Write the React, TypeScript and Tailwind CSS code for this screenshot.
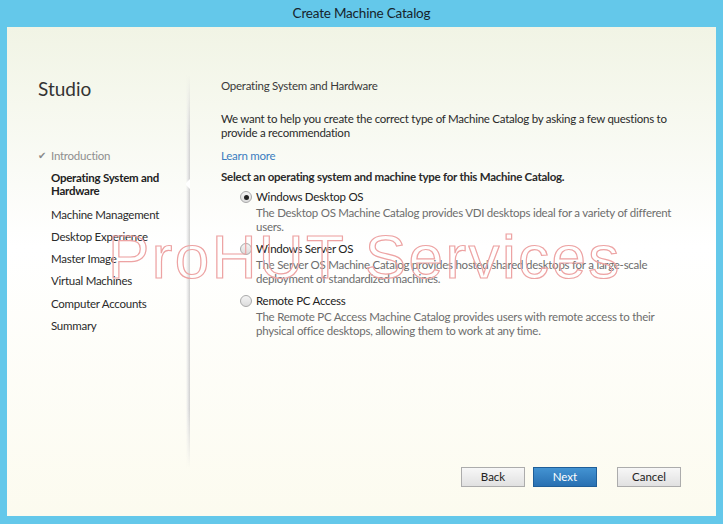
import React from "react";

const steps = [
  { id: 1, label: "Introduction", done: true },
  { id: 2, label: "Operating System and Hardware", active: true },
  { id: 3, label: "Machine Management" },
  { id: 4, label: "Desktop Experience" },
  { id: 5, label: "Master Image" },
  { id: 6, label: "Virtual Machines" },
  { id: 7, label: "Computer Accounts" },
  { id: 8, label: "Summary" },
];

const options = [
  {
    id: "desktop",
    title: "Windows Desktop OS",
    text: "The Desktop OS Machine Catalog provides VDI desktops ideal for a variety of different users.",
    checked: true,
  },
  {
    id: "server",
    title: "Windows Server OS",
    text: "The Server OS Machine Catalog provides hosted shared desktops for a large-scale deployment of standardized machines.",
  },
  {
    id: "remote",
    title: "Remote PC Access",
    text: "The Remote PC Access Machine Catalog provides users with remote access to their physical office desktops, allowing them to work at any time.",
  },
];

const Radio = ({ checked }: { checked?: boolean }) => (
  <span className="mt-[1px] flex h-[12px] w-[12px] shrink-0 items-center justify-center rounded-full border border-[#a9a9a9] bg-gradient-to-b from-[#f4f4f4] to-[#dcdcdc]">
    {checked && <span className="h-[5px] w-[5px] rounded-full bg-[#222]" />}
  </span>
);

const App = () => {
  return (
    <div className="relative flex h-[524px] w-[723px] flex-col overflow-hidden bg-[#64c8ea] font-['Lato',sans-serif] text-[#333]">
      {/* title bar */}
      <div className="flex h-[27px] items-center justify-center text-[13.5px] tracking-[-0.2px] text-[#16242c]">
        Create Machine Catalog
      </div>

      <div className="mx-[7px] mb-[8px] flex flex-1 bg-gradient-to-b from-[#f1f4e5] via-white via-45% to-[#fcfbef] text-[11.5px] tracking-[-0.25px]">
        {/* sidebar */}
        <aside className="flex w-[179px] flex-col pl-[31px]">
          <h1 className="mt-[50px] text-[19px] leading-[24px] tracking-normal text-[#333]">Studio</h1>
          <ul className="mt-[48px] flex flex-col gap-[9.3px] leading-[13px]">
            {steps.map((step) => (
              <li key={step.id} className="flex items-start">
                <span className="w-[13px] text-[10px] text-[#8a8a8a]">
                  {step.done ? "✔" : ""}
                </span>
                <span
                  className={
                    step.done
                      ? "text-[#8f8f8f]"
                      : step.active
                        ? "mb-[1px] w-[118px] font-bold text-[#222]"
                        : "text-[#2b2b2b]"
                  }
                >
                  {step.label}
                </span>
              </li>
            ))}
          </ul>
        </aside>

        {/* sidebar shadow */}
        <div className="relative my-[48px] w-[4px] bg-gradient-to-r from-transparent via-[#e6e6e6] to-[#cfcfcf] [mask-image:linear-gradient(to_bottom,transparent,black_15%,black_85%,transparent)]">
          <span className="absolute top-[104px] right-0 h-0 w-0 border-y-[5px] border-r-[5px] border-y-transparent border-r-white" />
        </div>

        {/* main */}
        <main className="flex flex-1 flex-col pl-[31px]">
          <h2 className="mt-[52px] leading-[14px] text-[#3a3a3a]">
            Operating System and Hardware
          </h2>
          <p className="mt-[19px] w-[462px] leading-[14px] text-[#2a2a2a]">
            We want to help you create the correct type of Machine Catalog by asking a few questions to
            provide a recommendation
          </p>
          <a className="mt-[9px] leading-[14px] text-[#3a7dbf]">Learn more</a>
          <p className="mt-[7px] font-bold leading-[14px] text-[#2a2a2a]">
            Select an operating system and machine type for this Machine Catalog.
          </p>
          <div className="mt-[6px] flex w-[464px] flex-col gap-[8px] pl-[19px]">
            {options.map((option) => (
              <div key={option.id} className="flex gap-[4px]">
                <Radio checked={option.checked} />
                <div className="flex flex-col leading-[14px]">
                  <span className="text-[#222]">{option.title}</span>
                  <span className="mt-[2px] text-[#6d6d6d]">{option.text}</span>
                </div>
              </div>
            ))}
          </div>

          <div className="mt-auto mb-[29px] flex justify-end pr-[35px] tracking-normal">
            <button className="h-[20px] w-[64px] border border-[#acacac] bg-gradient-to-b from-[#f7f7f7] to-[#e1e1e1] text-[#222]">
              Back
            </button>
            <button className="ml-[8px] h-[20px] w-[64px] border border-[#1f5e98] bg-gradient-to-b from-[#4393d2] to-[#2870b2] text-white">
              Next
            </button>
            <button className="ml-[20px] h-[20px] w-[64px] border border-[#acacac] bg-gradient-to-b from-[#f7f7f7] to-[#e1e1e1] text-[#222]">
              Cancel
            </button>
          </div>
        </main>
      </div>

      {/* watermark */}
      <div className="pointer-events-none absolute top-[222px] left-[108px] font-['Liberation_Sans',sans-serif] text-[62px] leading-[70px] tracking-[2.4px] text-transparent [-webkit-text-stroke:1.2px_#eda3a3]">
        ProHUT Services
      </div>
    </div>
  );
};

export default App;
